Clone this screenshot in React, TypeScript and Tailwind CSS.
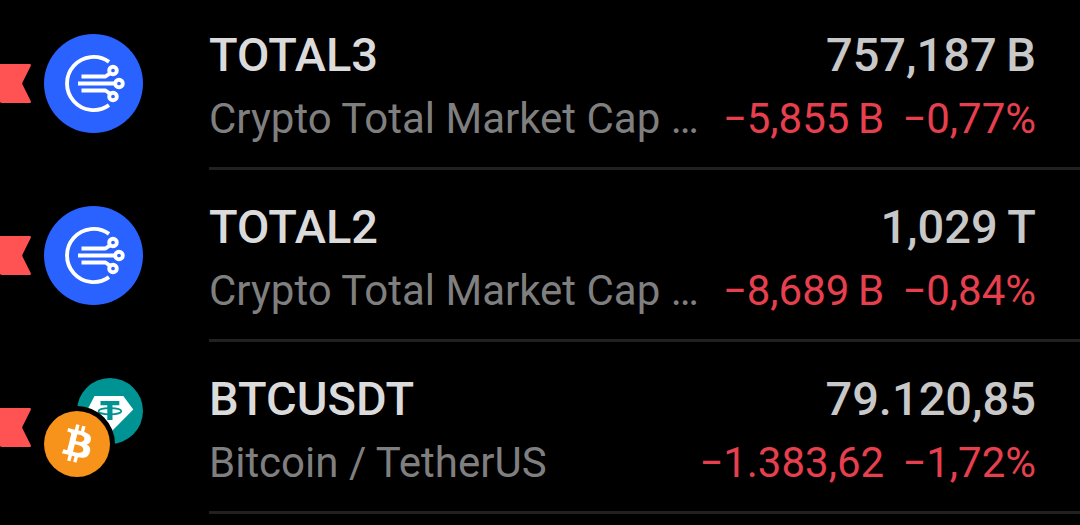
// App.tsx

interface WatchItem {
  symbol: string;
  name: string;
  price: string;
  change: string;
  percent: string;
  logo: "market-cap" | "btc-usdt";
}

const items: WatchItem[] = [
  {
    symbol: "TOTAL3",
    name: "Crypto Total Market Cap …",
    price: "757,187\u2009B",
    change: "−5,855\u2009B",
    percent: "−0,77%",
    logo: "market-cap",
  },
  {
    symbol: "TOTAL2",
    name: "Crypto Total Market Cap …",
    price: "1,029\u2009T",
    change: "−8,689\u2009B",
    percent: "−0,84%",
    logo: "market-cap",
  },
  {
    symbol: "BTCUSDT",
    name: "Bitcoin / TetherUS",
    price: "79.120,85",
    change: "−1.383,62",
    percent: "−1,72%",
    logo: "btc-usdt",
  },
];

function Flag() {
  return (
    <svg viewBox="0 0 31 39" className="h-[39px] w-[31px] shrink-0" aria-hidden="true">
      <path
        d="M0 0H29.5Q31.6 0 30.7 1.9L22.6 18.2Q22 19.5 22.6 20.8L30.7 37.1Q31.6 39 29.5 39H2Q.8 39 0 38Z"
        fill="#ff5252"
      />
    </svg>
  );
}

function MarketCapLogo() {
  return (
    <svg viewBox="0 0 99 99" className="size-[99px] shrink-0" aria-hidden="true">
      <circle cx="49.5" cy="49.5" r="49.5" fill="#2962ff" />
      <g fill="none" stroke="#fff" strokeWidth="3.9">
        <path d="M65 27.8A26.6 26.6 0 1 0 65 71.2" />
        <path d="M37.5 42.5H61.5L66.3 39.2" strokeLinejoin="round" />
        <path d="M34 49.5H70.5" />
        <path d="M37.5 56.5H61.5L66.3 59.8" strokeLinejoin="round" />
        <circle cx="69" cy="36.5" r="3.8" />
        <circle cx="75" cy="49.5" r="3.8" />
        <circle cx="69" cy="62.5" r="3.8" />
      </g>
    </svg>
  );
}

function BtcUsdtLogo() {
  return (
    <svg viewBox="0 0 99 99" className="size-[99px] shrink-0" aria-hidden="true">
      <circle cx="66" cy="33" r="33" fill="#009393" />
      <path d="M50.5 18H79.3L89.3 31.5L66 55L43.3 32Z" fill="#fff" />
      <path d="M56.5 22.9H75.3V27.3H68.5V42H63.3V27.3H56.5Z" fill="#009393" />
      <ellipse
        cx="65.9"
        cy="33.2"
        rx="11.4"
        ry="3.1"
        fill="none"
        stroke="#009393"
        strokeWidth="1.7"
      />
      <circle cx="33" cy="66" r="38" fill="#000" />
      <circle cx="33" cy="66" r="33" fill="#f7931a" />
      <path
        transform="translate(33 65.5) scale(1.93) translate(-16 -16)"
        fill="#fff"
        d="M23.189 14.02c.314-2.096-1.283-3.223-3.465-3.975l.708-2.84-1.728-.43-.69 2.765c-.454-.114-.92-.22-1.385-.326l.695-2.783L15.596 6l-.708 2.839c-.376-.086-.746-.17-1.104-.26l.002-.009-2.384-.595-.46 1.846s1.283.294 1.256.312c.7.175.826.638.805 1.006l-.806 3.235c.048.012.11.03.18.057l-.183-.045-1.13 4.532c-.086.212-.303.531-.793.41.018.025-1.256-.313-1.256-.313l-.858 1.978 2.25.561c.418.105.828.215 1.231.318l-.715 2.872 1.727.43.708-2.84c.472.127.93.245 1.378.357l-.706 2.828 1.728.43.715-2.866c2.948.558 5.164.333 6.097-2.333.752-2.146-.037-3.385-1.588-4.192 1.13-.26 1.98-1.003 2.207-2.538zm-3.95 5.538c-.533 2.147-4.148.986-5.32.695l.95-3.805c1.172.293 4.929.872 4.37 3.11zm.535-5.569c-.487 1.953-3.495.96-4.47.717l.86-3.45c.975.243 4.118.696 3.61 2.733z"
      />
    </svg>
  );
}

function WatchRow({ item }: { item: WatchItem }) {
  return (
    <li className="flex items-start">
      <div className="flex shrink-0 items-center gap-[13px] pt-9 pr-[66px]">
        <Flag />
        {item.logo === "market-cap" ? <MarketCapLogo /> : <BtcUsdtLogo />}
      </div>

      <div className="min-w-0 flex-1 border-b-3 border-[#212121] pt-[25px] pr-11 pb-4">
        <div className="flex justify-between gap-4 text-[47px] leading-[64px] font-medium whitespace-nowrap">
          <h2 className="truncate text-[#dbdbdb]">{item.symbol}</h2>
          <span className="text-[#c8c8c8]">{item.price}</span>
        </div>
        <div className="flex justify-between gap-4 text-[42px] leading-[64px] whitespace-nowrap">
          <p className="truncate text-[#7f7f7f]">{item.name}</p>
          <div className="flex gap-[18px] text-[#e63f4e]">
            <span>{item.change}</span>
            <span>{item.percent}</span>
          </div>
        </div>
      </div>
    </li>
  );
}

export default function App() {
  return (
    <main className="min-h-screen overflow-hidden bg-black font-[Roboto,sans-serif]">
      <ul className="-mt-0.5">
        {items.map((item) => (
          <WatchRow key={item.symbol} item={item} />
        ))}
      </ul>
    </main>
  );
}
